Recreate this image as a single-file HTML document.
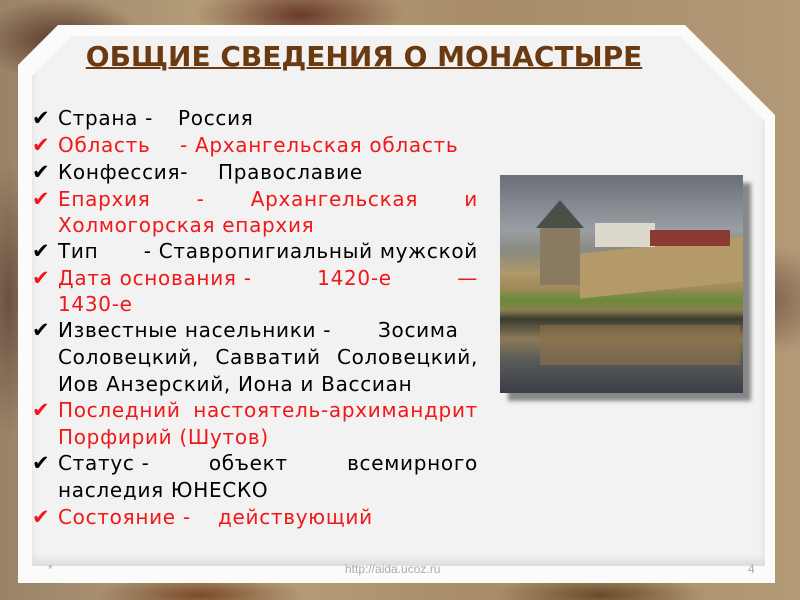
<!DOCTYPE html>
<html><head><meta charset="utf-8"><style>
html,body{margin:0;padding:0}
body{width:800px;height:600px;position:relative;overflow:hidden;
background:
radial-gradient(ellipse 120px 60px at 60px 40px,#5a3a2a 0%,transparent 70%),
radial-gradient(ellipse 150px 50px at 300px 15px,#6a3a2a 0%,transparent 70%),
radial-gradient(ellipse 100px 80px at 760px 300px,#7a5a4a 0%,transparent 70%),
radial-gradient(ellipse 40px 200px at 8px 300px,#6a5040 0%,transparent 70%),
radial-gradient(ellipse 150px 30px at 200px 595px,#7a4a2a 0%,transparent 70%),
radial-gradient(ellipse 150px 30px at 600px 595px,#6a4a2a 0%,transparent 70%),
linear-gradient(90deg,#9a8468,#b8a07a 30%,#a88c68 60%,#b29a76);}
.frame{position:absolute;left:18px;top:25px;width:758px;height:558px;background:#fbfbfb;
clip-path:polygon(40px 0,667px 0,757px 90px,757px 558px,0 558px,0 40px);border-radius:40px 0 0 0}
.panel{position:absolute;left:32px;top:36px;width:733px;height:530px;background:#f2f2f2;
clip-path:polygon(40px 0,648px 0,733px 85px,733px 530px,0 530px,0 40px);border-radius:38px 0 0 0;
box-shadow:inset 0 -6px 8px #ddd}
.title{position:absolute;left:70px;top:40px;width:588px;text-align:center;color:#6b3a10;
font:bold 28px "DejaVu Sans",sans-serif;text-decoration:underline;text-decoration-thickness:2px;white-space:nowrap}
.l{position:absolute;left:58px;width:420px;height:26px;font:20px "DejaVu Sans",sans-serif;letter-spacing:0.7px;white-space:nowrap;line-height:26px}
.j{display:flex;justify-content:space-between}
.r{color:#f01818}.b{color:#000}
.ck{position:absolute;left:-26px;top:0;font-size:21px;letter-spacing:0}
.s{position:absolute;top:0}
.foot{position:absolute;top:562px;font:12px "Liberation Sans",sans-serif;color:#aaa}
.img{position:absolute;left:500px;top:175px;width:243px;height:218px;box-shadow:8px 8px 4px #888;
background:linear-gradient(180deg,#6a6f78 0%,#9a9ea4 25%,#8a8a80 35%,#b09868 45%,#a08a58 52%,#6a8a3a 57%,#8a8050 62%,#3a3a30 66%,#8a7a58 75%,#5a5a58 85%,#3a3e48 100%);overflow:hidden}
</style></head><body>
<div class="frame"></div>
<div class="panel"></div>
<div class="title">ОБЩИЕ СВЕДЕНИЯ О МОНАСТЫРЕ</div>

<div class="img">
<div style="position:absolute;left:40px;top:50px;width:40px;height:60px;background:#8a7a62"></div>
<div style="position:absolute;left:36px;top:25px;width:0;height:0;border-left:24px solid transparent;border-right:24px solid transparent;border-bottom:28px solid #4a5048"></div>
<div style="position:absolute;left:80px;top:70px;width:163px;height:45px;background:#b49a68;transform:skewY(-6deg)"></div>
<div style="position:absolute;left:95px;top:48px;width:60px;height:24px;background:#ddd8cc"></div>
<div style="position:absolute;left:150px;top:55px;width:80px;height:16px;background:#8a3a30"></div>
<div style="position:absolute;left:40px;top:150px;width:200px;height:40px;background:#8a7248;opacity:.6"></div>
</div>

<div class="l b" style="top:105px"><span class="ck">✔</span>Страна -<span class="s" style="left:120px">Россия</span></div>
<div class="l r" style="top:132px"><span class="ck">✔</span>Область<span class="s" style="left:122px">- Архангельская область</span></div>
<div class="l b" style="top:159px"><span class="ck">✔</span>Конфессия-<span class="s" style="left:160px">Православие</span></div>
<div class="l r j" style="top:186px"><span class="ck">✔</span><span>Епархия</span><span>-</span><span>Архангельская</span><span>и</span></div>
<div class="l r" style="top:212px">Холмогорская епархия</div>
<div class="l b j" style="top:238px"><span class="ck">✔</span><span>Тип</span><span>- Ставропигиальный мужской</span></div>
<div class="l r j" style="top:265px"><span class="ck">✔</span><span>Дата основания -</span><span>1420-е</span><span>—</span></div>
<div class="l r" style="top:291px">1430-е</div>
<div class="l b" style="top:317px"><span class="ck">✔</span>Известные насельники -<span class="s" style="left:320px">Зосима</span></div>
<div class="l b j" style="top:344px"><span>Соловецкий,</span><span>Савватий</span><span>Соловецкий,</span></div>
<div class="l b" style="top:371px">Иов Анзерский, Иона и Вассиан</div>
<div class="l r j" style="top:397px"><span class="ck">✔</span><span>Последний</span><span>настоятель-архимандрит</span></div>
<div class="l r" style="top:424px">Порфирий (Шутов)</div>
<div class="l b j" style="top:450px"><span class="ck">✔</span><span>Статус -</span><span>объект</span><span>всемирного</span></div>
<div class="l b" style="top:477px">наследия ЮНЕСКО</div>
<div class="l r" style="top:504px"><span class="ck">✔</span>Состояние -<span class="s" style="left:160px">действующий</span></div>

<div class="foot" style="left:48px">*</div>
<div class="foot" style="left:345px">http://aida.ucoz.ru</div>
<div class="foot" style="left:748px">4</div>
</body></html>
